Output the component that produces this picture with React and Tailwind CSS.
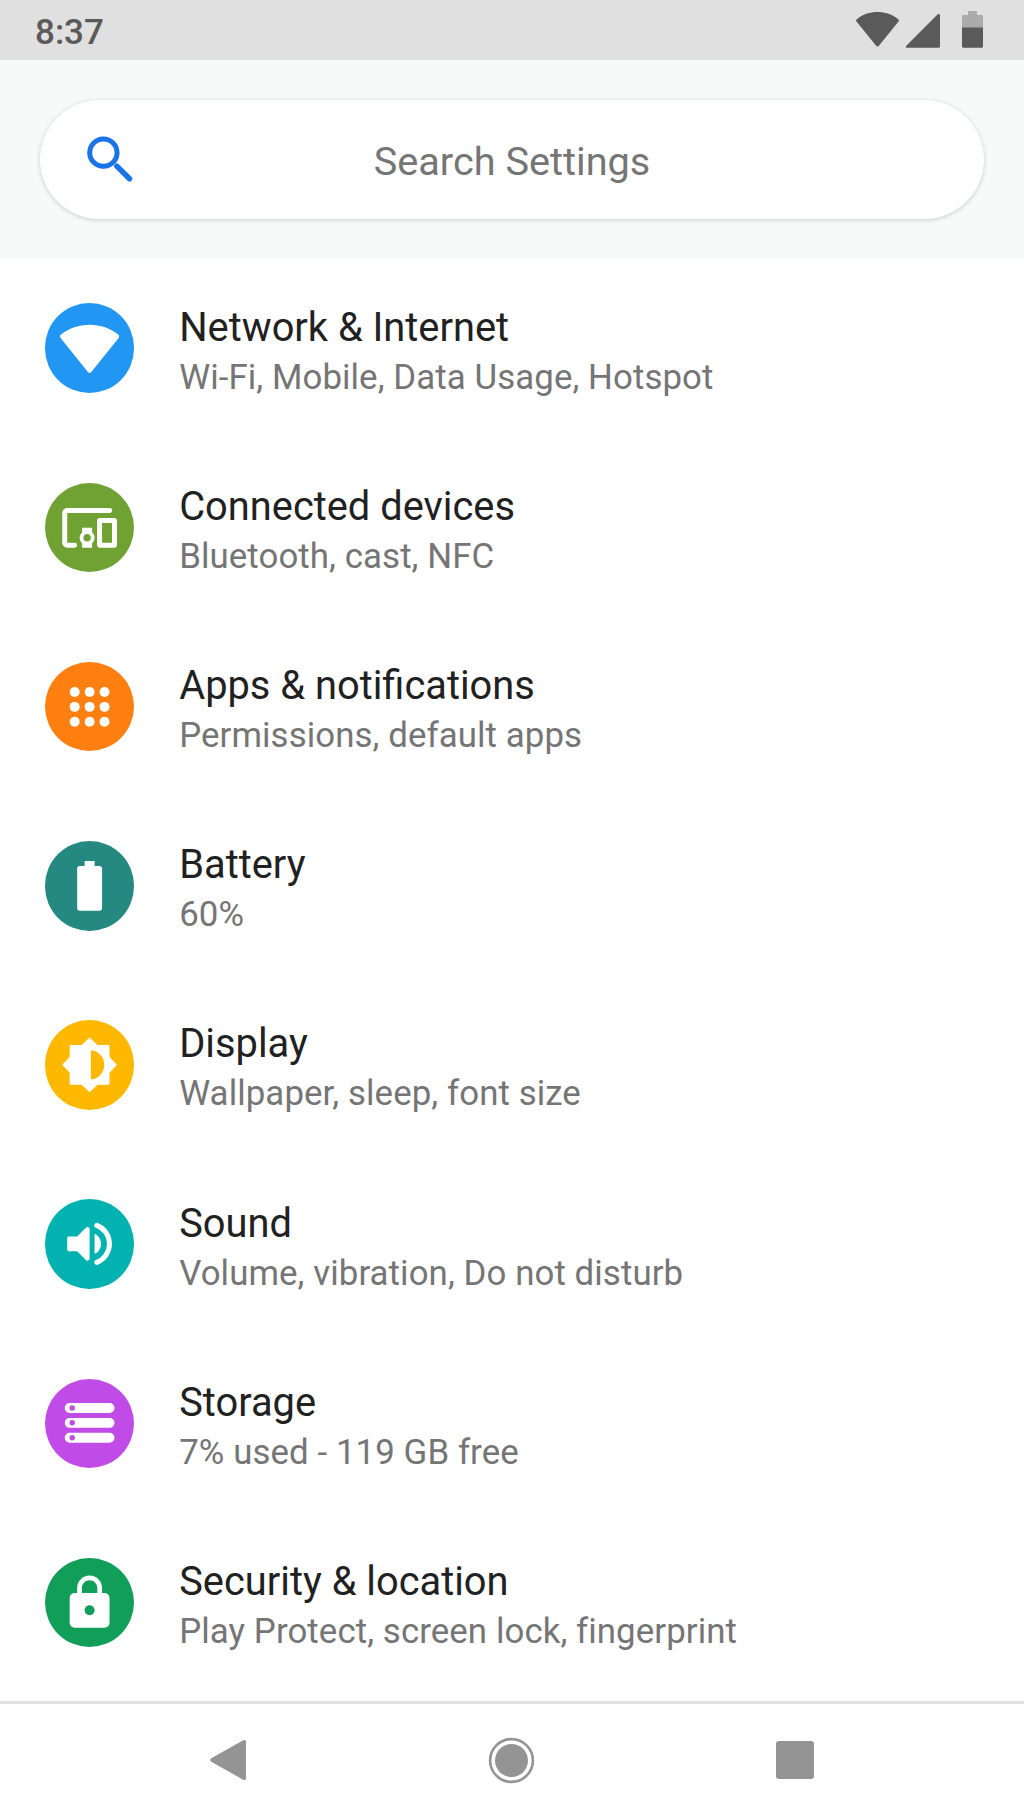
import React from "react";

const WifiIcon = () => (
  <path d="M.25 7.9C-.05 7.5 0 7 .4 6.7 3.6 4.1 7.7 2.7 12 2.7s8.400 1.400 11.600 4c.4.3.45.8.15 1.200L12.600 21.800c-.3.4-.9.4-1.200 0L.25 7.900z" />
);

const DevicesIcon = () => (
  <>
    <path
      d="M20.100 5H3C2.450 5 2 5.450 2 6v12c0 .55.45 1 1 1h3"
      fill="none"
      stroke="currentColor"
      strokeWidth="2"
      strokeLinecap="round"
    />
    <path d="M13 12H9v1.780c-.61.55-1 1.330-1 2.220s.39 1.670 1 2.220V20h4v-1.780c.61-.55 1-1.340 1-2.220s-.39-1.670-1-2.220V12zm-2 5.500c-.83 0-1.500-.67-1.500-1.500s.67-1.500 1.500-1.500 1.500.67 1.500 1.500-.67 1.500-1.500 1.500zM22 8h-6c-.5 0-1 .5-1 1v10c0 .5.5 1 1 1h6c.5 0 1-.5 1-1V9c0-.5-.5-1-1-1zm-1 10h-4v-8h4v8z" />
  </>
);

const AppsIcon = () => (
  <>
    {[6, 12, 18].map((y) =>
      [6, 12, 18].map((x) => <circle key={`${x}-${y}`} cx={x} cy={y} r="2" />)
    )}
  </>
);

const BatteryIcon = () => (
  <path d="M16 4h-2V2h-4v2H8c-.55 0-1 .45-1 1v16c0 .55.45 1 1 1h8c.55 0 1-.45 1-1V5c0-.55-.45-1-1-1z" />
);

const BrightnessIcon = () => (
  <path
    stroke="currentColor"
    strokeWidth=".6"
    strokeLinejoin="round"
    d="M19.700 15.100L22.600 12 19.700 8.900V4.300h-4.600L12 1.400 8.900 4.300H4.300v4.600L1.400 12l2.900 3.100v4.600h4.600L12 22.600l3.100-2.900h4.600v-4.600zM12.200 18.200V5.800c3.300 0 6 2.800 6 6.200s-2.700 6.200-6 6.200z"
  />
);

const SoundIcon = () => (
  <>
    <path d="M3 9.700v4.600c0 .4.3.7.7.7H7l3.500 3.500c.55.55 1.500.2 1.500-.6V6.100c0-.8-.95-1.150-1.500-.6L7 9H3.700c-.4 0-.7.3-.7.7z" />
    <path d="M14 8.300c0-.2.200-.3.400-.2 1.300.7 2.150 2.150 2.150 3.900s-.85 3.200-2.150 3.900c-.2.1-.4 0-.4-.2V8.300z" />
    <path
      d="M14.900 4.550a8 8 0 0 1 0 14.900"
      fill="none"
      stroke="currentColor"
      strokeWidth="2"
      strokeLinecap="round"
    />
  </>
);

const StorageIcon = () => (
  <>
    {[4, 10, 16].map((y) => (
      <path
        key={y}
        fillRule="evenodd"
        d={`M4 ${y}h16a2 2 0 0 1 0 4H4a2 2 0 0 1 0-4zM5 ${y + 0.9}a1.100 1.100 0 0 0 0 2.200 1.100 1.100 0 0 0 0-2.200z`}
      />
    ))}
  </>
);

const LockIcon = () => (
  <path d="M18 8h-1V6c0-2.760-2.240-5-5-5S7 3.240 7 6v2H6c-1.100 0-2 .9-2 2v10c0 1.100.9 2 2 2h12c1.100 0 2-.9 2-2V10c0-1.100-.9-2-2-2zm-6 9c-1.100 0-2-.9-2-2s.9-2 2-2 2 .9 2 2-.9 2-2 2zm3.100-9H8.900V6c0-1.710 1.390-3.100 3.100-3.100 1.710 0 3.100 1.390 3.100 3.100v2z" />
);

const settings = [
  { title: "Network & Internet", summary: "Wi-Fi, Mobile, Data Usage, Hotspot", color: "bg-[#2196f3]", icon: WifiIcon },
  { title: "Connected devices", summary: "Bluetooth, cast, NFC", color: "bg-[#70a233]", icon: DevicesIcon },
  { title: "Apps & notifications", summary: "Permissions, default apps", color: "bg-[#ff8010]", icon: AppsIcon },
  { title: "Battery", summary: "60%", color: "bg-[#258982]", icon: BatteryIcon },
  { title: "Display", summary: "Wallpaper, sleep, font size", color: "bg-[#ffb800]", icon: BrightnessIcon },
  { title: "Sound", summary: "Volume, vibration, Do not disturb", color: "bg-[#02b2b1]", icon: SoundIcon },
  { title: "Storage", summary: "7% used - 119 GB free", color: "bg-[#c04be6]", icon: StorageIcon },
  { title: "Security & location", summary: "Play Protect, screen lock, fingerprint", color: "bg-[#119e59]", icon: LockIcon },
];

const StatusBar = () => (
  <div className="flex h-[60px] shrink-0 items-center justify-between bg-[#e0e0e0] pr-[41px] pl-[35px] text-[#5a5a5a]">
    <span className="pt-1 text-[35px] leading-[41px] font-medium">8:37</span>
    <svg className="h-[60px] w-[127px]" viewBox="856 0 127 60" fill="currentColor">
      <path d="M856.500 21.500c-.7-.8-.5-1.700.3-2.300C862.500 14.500 870 12 877.500 12s15 2.500 20.700 7.200c.8.6 1 1.500.3 2.300l-19.600 24.300c-.8 1-2 1-2.800 0z" />
      <path d="M906.300 45.700l31.200-31.200c1-1 2.500-.4 2.500 1v30.700c0 1-.7 1.600-1.600 1.600h-31.200c-1.400 0-1.900-1.200-.9-2.100z" />
      <path
        fill="#ababab"
        d="M968 11h9v4h4.500c.9 0 1.500.6 1.500 1.500V28h-21V16.500c0-.9.6-1.500 1.500-1.500h4.500z"
      />
      <path d="M962 27.500h21v18.800c0 .9-.6 1.500-1.500 1.500h-18c-.9 0-1.500-.6-1.500-1.500z" />
    </svg>
  </div>
);

const SearchBar = () => (
  <div className="h-[198.600px] shrink-0 bg-[#f8f9f9] px-10 pt-[39.500px]">
    <div className="grid h-[119.500px] grid-cols-[1fr_auto_1fr] items-center rounded-full bg-white pl-[39.500px] shadow-[0_1px_5px_rgba(0,0,0,0.18)]">
      <svg
        className="size-[59.730px] text-[#1a73e8]"
        viewBox="0 0 24 24"
        fill="none"
        stroke="currentColor"
        strokeWidth="2"
      >
        <circle cx="9.400" cy="9.500" r="5.500" />
        <path d="M14.800 14.900L19.900 20" strokeWidth="2.200" strokeLinecap="round" />
      </svg>
      <span className="-ml-[39.500px] pt-[5px] text-[39.700px] text-[#757575]">Search Settings</span>
    </div>
  </div>
);

const SettingRow = ({ title, summary, color, icon: Icon }) => (
  <li className="flex h-[179.200px] items-center pl-[44.800px]">
    <span className={`flex size-[89.600px] items-center justify-center rounded-full text-white ${color}`}>
      <svg className="size-[59.730px]" viewBox="0.100 0 24 24" fill="currentColor">
        <Icon />
      </svg>
    </span>
    <div className="pt-[5px] pl-[44.800px]">
      <p className="text-[39.820px] leading-[53px] text-[#212121]">{title}</p>
      <p className="text-[34.840px] leading-[47px] tracking-[0.080px] text-[#757575]">{summary}</p>
    </div>
  </li>
);

const NavBar = () => (
  <nav className="flex h-[119px] shrink-0 items-center border-t-[3px] border-[#e0e0e0] bg-white pb-1 pl-[210px] text-[#949494]">
    <svg className="h-[42px] w-[37px]" viewBox="0 0 37 42" fill="currentColor">
      <path d="M1.300 19.200L33.200 1.200c1.300-.8 2.800 0 2.800 1.500v36.600c0 1.500-1.500 2.300-2.800 1.500L1.300 22.800c-1.400-.9-1.400-2.700 0-3.600z" />
    </svg>
    <svg className="ml-[241px] size-[47px]" viewBox="0 0 47 47" fill="currentColor">
      <circle cx="23.500" cy="23.500" r="21.400" fill="none" stroke="currentColor" strokeWidth="2.600" />
      <circle cx="23.500" cy="23.500" r="16.500" />
    </svg>
    <span className="ml-[241px] size-[37.500px] rounded-[3px] bg-[#949494]" />
  </nav>
);

export default function App() {
  return (
    <div className="flex h-[1820px] w-[1024px] flex-col overflow-hidden bg-white font-[Roboto,sans-serif]">
      <StatusBar />
      <SearchBar />
      <ul className="min-h-0 flex-1">
        {settings.map((item) => (
          <SettingRow key={item.title} {...item} />
        ))}
      </ul>
      <NavBar />
    </div>
  );
}
